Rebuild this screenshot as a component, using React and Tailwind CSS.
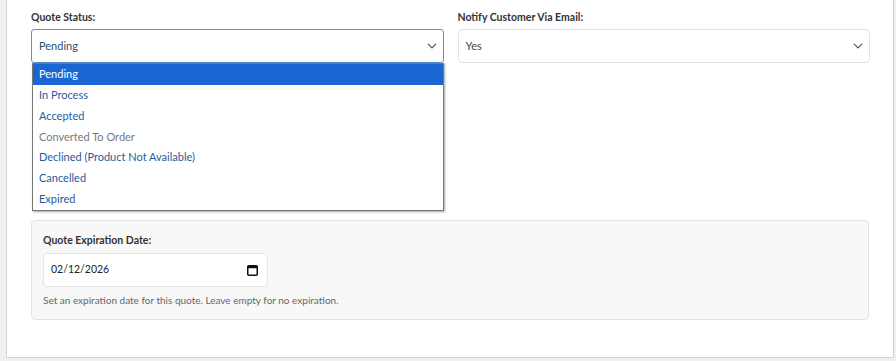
import React from "react";

function Chevron({ className }) {
  return (
    <svg className={className} width="10" height="10" viewBox="0 0 16 16" fill="none">
      <path d="M2 5l6 6 6-6" stroke="currentColor" strokeWidth="2" strokeLinecap="round" strokeLinejoin="round" />
    </svg>
  );
}

function CalendarIcon() {
  return (
    <svg width="11" height="11" viewBox="0 0 11 11">
      <rect x="0.75" y="0.75" width="9.5" height="9.5" rx="1" fill="none" stroke="#111" strokeWidth="1.5" />
      <rect x="0.75" y="0.75" width="9.5" height="2.5" fill="#111" />
    </svg>
  );
}

const options = [
  { label: "Pending", selected: true },
  { label: "In Process" },
  { label: "Accepted" },
  { label: "Converted To Order", disabled: true },
  { label: "Declined (Product Not Available)" },
  { label: "Cancelled" },
  { label: "Expired" },
];

export default function App() {
  return (
    <div className="w-[896px] h-[361px] bg-[#f0f0f0] pl-[6px] pr-[2px] pb-[3px] overflow-hidden" style={{ fontFamily: "Lato, 'Noto Sans', sans-serif" }}>
      <div className="h-full bg-white border-x border-b border-[#d4d4d4] pl-[24px] pr-[23px] pt-[10px]">
        <div className="grid grid-cols-2 gap-[14px]">
          <div>
            <label className="block text-[10.5px] leading-[15px] font-bold text-[#333] mb-[4px]">Quote Status:</label>
            <div className="relative">
              <div className="h-[34px] rounded-[3px] border border-[#5d8fd0] flex items-center justify-between pl-[7px] pr-[6px] text-[11px] text-[#2d4f73]">
                <span>Pending</span>
                <Chevron className="text-[#555]" />
              </div>
              <div className="absolute left-[1px] right-0 top-full z-10 bg-white border border-[#767676] shadow-[1px_1px_2px_rgba(0,0,0,0.35)] text-[11px]">
                {options.map((o) => (
                  <div
                    key={o.label}
                    className={
                      "h-[20.8px] flex items-center pl-[6px] " +
                      (o.selected ? "bg-[#1a67d3] text-white" : o.disabled ? "text-[#7a7a7a]" : "text-[#1f5c9c]")
                    }
                  >
                    {o.label}
                  </div>
                ))}
              </div>
            </div>
          </div>
          <div>
            <label className="block text-[10.5px] leading-[15px] font-bold text-[#333] mb-[4px]">Notify Customer Via Email:</label>
            <div className="h-[34px] rounded-[4px] border border-[#e3e3e3] flex items-center justify-between pl-[7px] pr-[6px] text-[11px] text-[#444]">
              <span>Yes</span>
              <Chevron className="text-[#555]" />
            </div>
          </div>
        </div>

        <div className="mt-[157px] mr-[1px] bg-[#f8f8f8] border border-[#e4e4e4] rounded-[4px] h-[100px] px-[11px] pt-[12px]">
          <label className="block text-[10.5px] leading-[15px] font-bold text-[#333] mb-[5px]">Quote Expiration Date:</label>
          <div className="w-[225px] h-[34px] bg-white border border-[#e6e6e6] rounded-[4px] flex items-center justify-between pl-[7px] pr-[9px] text-[10.5px] text-[#222]">
            <span>02/12/2026</span>
            <CalendarIcon />
          </div>
          <p className="mt-[6px] text-[10px] text-[#666]">Set an expiration date for this quote. Leave empty for no expiration.</p>
        </div>
      </div>
    </div>
  );
}
